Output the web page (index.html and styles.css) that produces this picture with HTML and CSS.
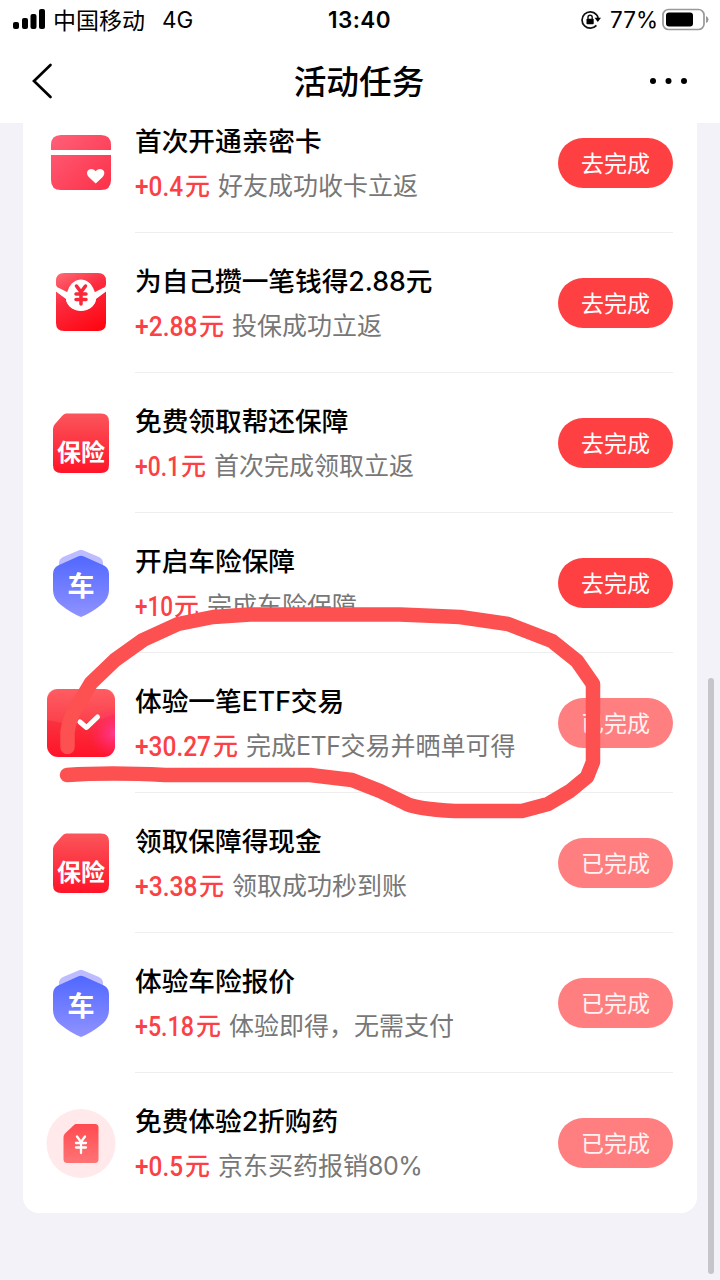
FILE: index.html
```html
<!DOCTYPE html>
<html lang="zh-CN">
<head>
<meta charset="utf-8">
<title>活动任务</title>
<link rel="stylesheet" href="styles.css">
</head>
<body>
<svg class="defs" width="0" height="0">
  <defs>
    <linearGradient id="pink" x1="0" y1="0" x2="1" y2="1"><stop offset="0" stop-color="#ff6079"/><stop offset="1" stop-color="#fc3048"/></linearGradient>
    <linearGradient id="red" gradientUnits="userSpaceOnUse" x1="18" y1="6" x2="50" y2="64"><stop offset="0" stop-color="#ff6470"/><stop offset=".4" stop-color="#fb2b3f"/><stop offset="1" stop-color="#ff0712"/></linearGradient>
    <linearGradient id="policy" x1="0" y1="0" x2="0" y2="1"><stop offset="0" stop-color="#fb555b"/><stop offset="1" stop-color="#ff1428"/></linearGradient>
    <linearGradient id="blue" x1="0" y1="0" x2="0" y2="1"><stop offset="0" stop-color="#5068ff"/><stop offset="1" stop-color="#9092ff"/></linearGradient>
    <linearGradient id="etf" x1="0" y1="0" x2="0" y2="1"><stop offset="0" stop-color="#ff5960"/><stop offset=".5" stop-color="#fa303e"/><stop offset="1" stop-color="#ff1328"/></linearGradient>
    <radialGradient id="glow" cx="1" cy=".65" r=".4"><stop offset="0" stop-color="#ff3b90"/><stop offset="1" stop-color="#ff206a" stop-opacity="0"/></radialGradient>
    <symbol id="i-policy" viewBox="0 0 72 72">
      <path d="M22 6.500H57Q65 6.500 65 14.500V58Q65 66 57 66H17Q9 66 9 58V22Q9 19 11 17L18 9Q20 6.500 22 6.500Z" fill="url(#policy)"/>
      <text x="37" y="53.500" class="icon-text policy-text">保险</text>
    </symbol>
    <symbol id="i-car" viewBox="0 0 72 72">
      <path d="M35 3.200Q37 2.200 39 3.200L55 10Q59 12 59 16V32H15V16Q15 12 19 10Z" fill="#bdbcff"/>
      <path d="M34 9.500Q37 8 40 9.500L60 18.500Q65 21 65 27V43Q65 52 57 58Q47 66 37 70Q27 66 17 58Q9 52 9 43V27Q9 21 14 18.500Z" fill="url(#blue)"/>
      <text x="37" y="49" class="icon-text car-text">车</text>
    </symbol>
  </defs>
</svg>

<header class="header">
  <div class="status">
    <div class="status-left">
      <svg class="signal" width="33" height="22" viewBox="0 0 33 22"><rect x="0" y="13" width="6" height="7" rx="2"/><rect x="9" y="9" width="6" height="11" rx="2"/><rect x="17.500" y="5" width="6" height="15" rx="2"/><rect x="26" y="0" width="6" height="20" rx="2"/></svg>
      <span class="carrier">中国移动</span><span class="network">4G</span>
    </div>
    <span class="clock">13:40</span>
    <div class="status-right">
      <svg width="21" height="20" viewBox="0 0 21 20"><path d="M16.400 4.600A8.200 8.200 0 1 0 16.400 15.400M16.400 4.600Q18 6.300 18.100 8.400" fill="none" stroke="#111" stroke-width="1.700"/><path d="M14.500 7.800H21L17.800 12Z"/><rect x="6.500" y="8.700" width="7.200" height="5.600" rx=".8"/><path d="M8 9V7.300a2.100 2.100 0 0 1 4.200 0V9" fill="none" stroke="#111" stroke-width="1.400"/></svg>
      <span class="percent">77%</span>
      <svg class="battery" width="47" height="24" viewBox="0 0 47 24"><rect x="1" y="1.500" width="41" height="20" rx="5.500" fill="none" stroke="#999" stroke-width="1.700"/><rect x="4" y="4.500" width="27" height="14" rx="3"/><path d="M44 8Q46.500 9 46.500 11.500T44 15Z" fill="#999"/></svg>
    </div>
  </div>
  <nav class="nav">
    <svg width="24" height="40" viewBox="0 0 24 40"><path d="M20.500 4L4 20L20.500 36" fill="none" stroke="#000" stroke-width="2.700" stroke-linecap="round"/></svg>
    <h1>活动任务</h1>
    <svg width="40" height="8" viewBox="0 0 40 8"><circle cx="4" cy="4" r="3"/><circle cx="19.500" cy="4" r="3"/><circle cx="35" cy="4" r="3"/></svg>
  </nav>
</header>

<main class="page">
  <ul class="card">
    <li class="task">
      <svg class="icon" viewBox="0 0 72 72"><path d="M7 23V18Q7 8 17 8H57Q67 8 67 18V23ZM7 28H67V53Q67 63 57 63H17Q7 63 7 53Z" fill="url(#pink)"/><path d="M51.700 56.500L45 50.200C39.500 44.500 47 38.500 51.700 44.300C56.400 38.500 64 44.500 58.400 50.200Z" fill="#fff"/></svg>
      <div class="info"><h2>首次开通亲密卡</h2><p><span class="reward"><svg class="num" width="50" height="34"><text x="0" y="25.500" textLength="48" lengthAdjust="spacingAndGlyphs">+0.4</text></svg>元</span><span>好友成功收卡立返</span></p></div>
      <button class="btn">去完成</button>
    </li>
    <li class="task">
      <svg class="icon" viewBox="0 0 72 72"><path d="M20 6H54Q62 6 62 14V17Q62 20 59 21L50 25.500C46 9 28 9 24 25.500L15 21Q12 20 12 17V14Q12 6 20 6Z" fill="url(#red)"/><path d="M12 24.500L22 32C25 48 49 48 52 32L62 24.500V56Q62 64 54 64H20Q12 64 12 56Z" fill="url(#red)"/><path d="M24 23C29 9 45 9 50 23L52 28V33C49 47 25 47 22 33V28Z" fill="#fff"/><path d="M32.500 19L37 25L41.500 19M32 27H42M32 32.500H42M37 25V37" fill="none" stroke="#fb2638" stroke-width="3.500" stroke-linecap="round"/></svg>
      <div class="info"><h2>为自己攒一笔钱得2.88元</h2><p><span class="reward"><svg class="num" width="64" height="34"><text x="0" y="25.500" textLength="62.500" lengthAdjust="spacingAndGlyphs">+2.88</text></svg>元</span><span>投保成功立返</span></p></div>
      <button class="btn">去完成</button>
    </li>
    <li class="task">
      <svg class="icon"><use href="#i-policy"/></svg>
      <div class="info"><h2>免费领取帮还保障</h2><p><span class="reward"><svg class="num" width="46" height="34"><text x="0" y="25.500" textLength="45" lengthAdjust="spacingAndGlyphs">+0.1</text></svg>元</span><span>首次完成领取立返</span></p></div>
      <button class="btn">去完成</button>
    </li>
    <li class="task">
      <svg class="icon"><use href="#i-car"/></svg>
      <div class="info"><h2>开启车险保障</h2><p><span class="reward"><svg class="num" width="39" height="34"><text x="0" y="25.500" textLength="38" lengthAdjust="spacingAndGlyphs">+10</text></svg>元</span><span>完成车险保障</span></p></div>
      <button class="btn">去完成</button>
    </li>
    <li class="task">
      <svg class="icon" viewBox="0 0 72 72"><rect x="3" y="2" width="68" height="68" rx="11" fill="url(#etf)"/><path d="M3 33Q37 42 71 27V13Q71 2 60 2H14Q3 2 3 13Z" fill="#ff686b" opacity=".3"/><rect x="3" y="2" width="68" height="68" rx="11" fill="url(#glow)"/><path d="M36 35L42.500 40.500L53.500 30" fill="none" stroke="#fff" stroke-width="5" stroke-linecap="round" stroke-linejoin="round"/></svg>
      <div class="info"><h2>体验一笔ETF交易</h2><p><span class="reward"><svg class="num" width="78" height="34"><text x="0" y="25.500" textLength="76" lengthAdjust="spacingAndGlyphs">+30.27</text></svg>元</span><span>完成<span class="latin">ETF</span>交易并晒单可得</span></p></div>
      <button class="btn done">已完成</button>
    </li>
    <li class="task">
      <svg class="icon"><use href="#i-policy"/></svg>
      <div class="info"><h2>领取保障得现金</h2><p><span class="reward"><svg class="num" width="64" height="34"><text x="0" y="25.500" textLength="62.500" lengthAdjust="spacingAndGlyphs">+3.38</text></svg>元</span><span>领取成功秒到账</span></p></div>
      <button class="btn done">已完成</button>
    </li>
    <li class="task">
      <svg class="icon"><use href="#i-car"/></svg>
      <div class="info"><h2>体验车险报价</h2><p><span class="reward"><svg class="num" width="61" height="34"><text x="0" y="25.500" textLength="59" lengthAdjust="spacingAndGlyphs">+5.18</text></svg>元</span><span>体验即得，无需支付</span></p></div>
      <button class="btn done">已完成</button>
    </li>
    <li class="task">
      <svg class="icon" viewBox="0 0 72 72"><defs><linearGradient id="med" x1="0" y1="0" x2="0" y2="1"><stop offset="0" stop-color="#ff4b50"/><stop offset="1" stop-color="#ff7476"/></linearGradient></defs><circle cx="37" cy="36.500" r="34.500" fill="#ffe9ea"/><path d="M32 17H51Q54.500 17 54.500 20.500V52Q54.500 56 51 56H23Q19.500 56 19.500 52V30Q19.500 28 21 26.500L30 18Q31 17 32 17Z" fill="url(#med)"/><path d="M33 29.500L37 35L41 29.500M32 36H42M32 40.500H42M37 35V46" fill="none" stroke="#fff" stroke-width="2.300" stroke-linecap="round"/></svg>
      <div class="info"><h2>免费体验2折购药</h2><p><span class="reward"><svg class="num" width="50" height="34"><text x="0" y="25.500" textLength="48" lengthAdjust="spacingAndGlyphs">+0.5</text></svg>元</span><span>京东买药报销<span class="latin">80%</span></span></p></div>
      <button class="btn done">已完成</button>
    </li>
  </ul>
</main>
<div class="scrollbar"></div>
<svg class="marker" width="720" height="1280" viewBox="0 0 720 1280"><path d="M67.500 747V732Q70 716 76 708L91 683L115 660L143 640L178 624L213 617L250 614.500H400L460 617L508 624L552 641L577 661L593 684V762L587 777L570 791L548 804L522 811H455Q415 809 405 803L380 791L352 780L310 775H165Q110 772 67 775" fill="none" stroke="#fc5051" stroke-width="14.500" stroke-linecap="round" stroke-linejoin="round"/></svg>
</body>
</html>
```
FILE: styles.css
```css
* { box-sizing: border-box; }
body {
  margin: 0;
  width: 720px;
  height: 1280px;
  position: relative;
  overflow: hidden;
  background: #f3f2f8;
  color: #000;
  font-family: "Noto Sans CJK SC", sans-serif;
}
h1, h2, p, ul { margin: 0; padding: 0; }
.defs { position: absolute; }
.header { height: 123px; background: #fff; position: relative; z-index: 1; }
.status { display: grid; grid-template-columns: 1fr auto 1fr; height: 39px; align-items: center; padding: 0 11px 0 13px; font-size: 23px; }
.status-left, .status-right { display: flex; align-items: center; }
.status-right { justify-content: flex-end; }
.signal { margin-right: 7px; }
.carrier { line-height: 36px; padding-bottom: 2px; }
.network { font-family: Inter, sans-serif; margin-left: 17px; font-size: 22.5px; }
.clock { font: 600 22.5px Inter, sans-serif; letter-spacing: .4px; margin-left: -3px; }
.percent { font: 400 22.5px Inter, sans-serif; margin: 0 4px 0 9px; }
.nav { display: grid; grid-template-columns: 1fr auto 1fr; height: 83px; align-items: center; padding: 0 31px 0 30px; }
.nav > :last-child { justify-self: end; }
h1 { font-size: 32.700px; font-weight: 500; line-height: 48px; margin: -1px 0 0 -1px; }
.page { height: 1157px; overflow: hidden; padding: 0 23px; }
.card { list-style: none; background: #fff; margin-top: -30px; border-radius: 16px; }
.task { height: 140px; display: flex; align-items: center; padding: 0 24px 0 21px; }
.icon { width: 72px; height: 72px; flex: none; margin-right: 19px; }
.info { flex: 1; align-self: stretch; padding-top: 30px; border-bottom: 1px solid #eee; white-space: nowrap; font-family: Inter, "Noto Sans CJK SC", sans-serif; }
.task:last-child .info { border-bottom-color: transparent; }
h2 { font-size: 26.700px; line-height: 36px; font-weight: 500; letter-spacing: -.02px; }
p { display: flex; gap: 8px; margin-top: 11px; font-size: 25px; line-height: 32px; color: #777; }
.latin { letter-spacing: -.5px; }
.reward { display: flex; color: #fb4145; font-weight: 500; }
.num { display: block; flex: none; overflow: visible; fill: currentColor; font: 500 28px Roboto, sans-serif; }
.btn { width: 115px; height: 50px; flex: none; align-self: center; margin-left: -115px; border: 0; border-radius: 25px; padding: 0 0 2px; background: #ff4042; color: #fff; font: 400 23px/46px "Noto Sans CJK SC", sans-serif; }
.done { background: #ff7f80; color: #fff3f3; }
.icon-text { fill: #fff; text-anchor: middle; font-family: "Noto Sans CJK SC", sans-serif; font-weight: 700; }
.policy-text { font-size: 24px; }
.car-text { font-size: 27px; }
.scrollbar { position: absolute; left: 708px; top: 678px; width: 6px; height: 596px; border-radius: 3px; background: #c6c5ca; }
.marker { position: absolute; left: 0; top: 0; z-index: 2; }
```
